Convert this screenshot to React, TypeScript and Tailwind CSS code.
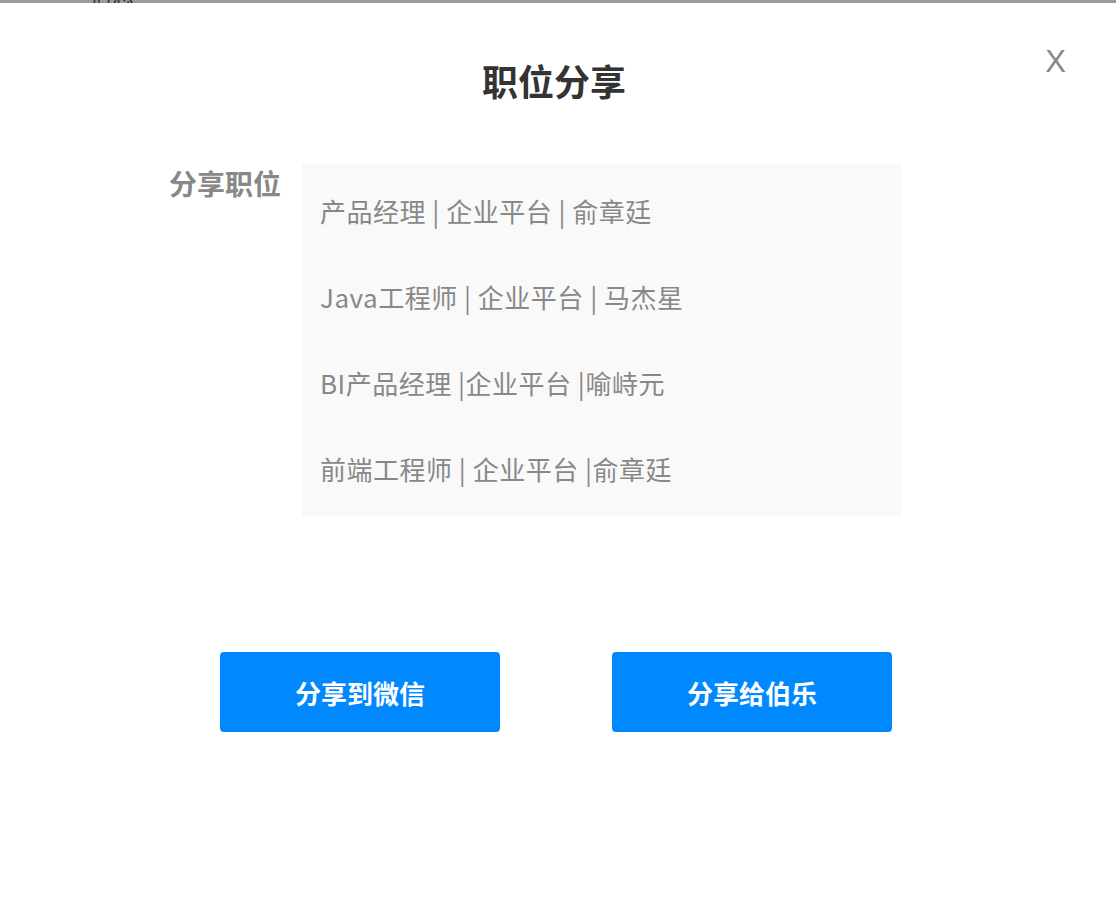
import React from 'react';

const jobs = [
  '产品经理 | 企业平台 | 俞章廷',
  'Java工程师 | 企业平台 | 马杰星',
  'BI产品经理 |企业平台 |喻峙元',
  '前端工程师 | 企业平台 |俞章廷',
];

const font = { fontFamily: '"Noto Sans CJK SC", "Noto Sans", sans-serif' };

export default function App() {
  return (
    <div className="w-[1116px] h-[912px] bg-white overflow-hidden relative" style={font}>
      {/* page behind the dialog */}
      <div className="h-[3px] bg-[#9a9a9a] overflow-hidden relative">
        <span className="absolute left-[90px] top-[-18px] text-[22px] leading-[22px] text-[#333]">信息</span>
      </div>

      {/* close */}
      <button className="absolute right-[50px] top-[42px] font-['Liberation_Sans',sans-serif] text-[31px] leading-[40px] text-[#888]">
        X
      </button>

      {/* title */}
      <h1 className="mt-[53px] pr-[8px] text-center text-[36px] leading-[48px] font-bold text-[#333]">
        职位分享
      </h1>

      {/* jobs */}
      <div className="mt-[60px] flex pl-[169px]">
        <div className="w-[133px] text-[28px] leading-[38px] font-bold text-[#888]">分享职位</div>
        <div className="w-[600px] bg-[#f9f9f9] pt-[3px] pb-[5px] pl-[18px]">
          {jobs.map((job) => (
            <div key={job} className="h-[86px] flex items-center text-[26px] tracking-[0.5px] text-[#888]">
              {job}
            </div>
          ))}
        </div>
      </div>

      {/* actions */}
      <div className="mt-[136px] flex gap-[112px] pl-[220px]">
        <button className="w-[280px] h-[80px] rounded-[4px] bg-[#0088ff] text-white text-[26px] font-bold">
          分享到微信
        </button>
        <button className="w-[280px] h-[80px] rounded-[4px] bg-[#0088ff] text-white text-[26px] font-bold">
          分享给伯乐
        </button>
      </div>
    </div>
  );
}
